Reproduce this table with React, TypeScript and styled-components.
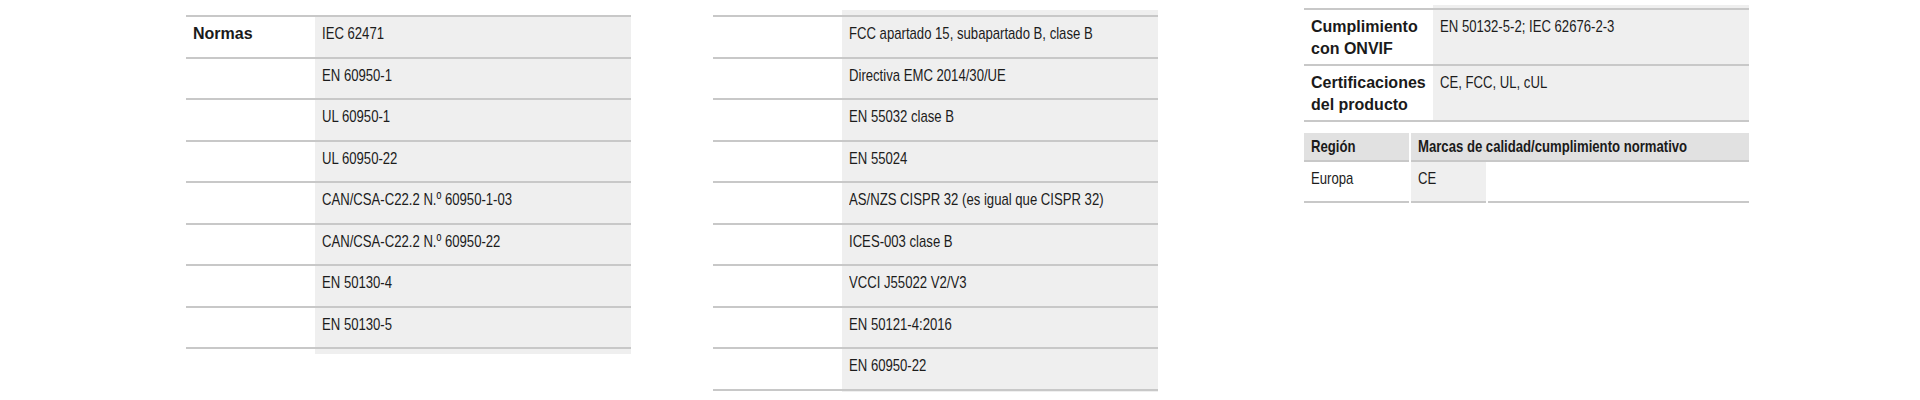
import styled, { createGlobalStyle } from 'styled-components';

const GlobalStyle = createGlobalStyle`
    html, body {
        margin: 0;
        padding: 0;
        background: #fff;
    }
    body {
        font-family: "Liberation Sans", Arial, sans-serif;
        color: #1c1c1c;
    }
`;

const LINE = '#c8c8c8';
const CELL = '#efefef';
const HEAD = '#e1e1e1';

const Page = styled.div`
    display: flex;
    align-items: flex-start;
    padding-left: 186px;
    height: 400px;
    box-sizing: border-box;
`;

const Column = styled.div<{ $left: number; $top: number }>`
    width: 445px;
    flex: none;
    margin-left: ${(p) => p.$left}px;
    margin-top: ${(p) => p.$top}px;
`;

const SpecTable = styled.div<{ $padTop: number; $padBottom: number }>`
    padding: ${(p) => p.$padTop}px 0 ${(p) => p.$padBottom}px;
    background: linear-gradient(to right, transparent 129px, ${CELL} 129px);
`;

const Rows = styled.div`
    border-top: 2px solid ${LINE};
`;

const Row = styled.div`
    display: grid;
    grid-template-columns: 129px 1fr;
    min-height: 41.5px;
    box-sizing: border-box;
    border-bottom: 2px solid ${LINE};
`;

const Label = styled.div`
    padding: 6px 7px 4px;
    font-weight: 700;
    font-size: 16px;
    line-height: 22px;
    color: #1a1a1a;
`;

const Value = styled.div`
    padding: 6px 7px 4px;
    font-size: 17px;
    line-height: 22px;
`;

// no narrow face is installed, so squeeze Liberation Sans to the condensed widths
const Narrow = styled.span`
    display: inline-block;
    white-space: nowrap;
    transform: scaleX(0.772);
    transform-origin: left center;
`;

const RegionTable = styled.div`
    margin-top: 11px;
    display: grid;
    grid-template-columns: 105px 75px 1fr;
    column-gap: 2px;
`;

const HeadCell = styled.div<{ $span?: number }>`
    grid-column: span ${(p) => p.$span ?? 1};
    background: ${HEAD};
    border-bottom: 2px solid ${LINE};
    padding: 3px 6px 2px 7px;
    font-weight: 700;
    font-size: 17px;
    line-height: 22px;
    color: #1a1a1a;
    overflow: hidden;
`;

const BodyCell = styled.div<{ $shade?: boolean }>`
    background: ${(p) => (p.$shade ? CELL : 'transparent')};
    border-bottom: 2px solid ${LINE};
    padding: 6px 6px 11px 7px;
    font-size: 17px;
    line-height: 22px;
    min-height: 22px;
`;

type Spec = { label?: string; value: string };

const normas: Spec[] = [
    { label: 'Normas', value: 'IEC 62471' },
    { value: 'EN 60950-1' },
    { value: 'UL 60950-1' },
    { value: 'UL 60950-22' },
    { value: 'CAN/CSA-C22.2 N.º 60950-1-03' },
    { value: 'CAN/CSA-C22.2 N.º 60950-22' },
    { value: 'EN 50130-4' },
    { value: 'EN 50130-5' },
];

const emc: Spec[] = [
    { value: 'FCC apartado 15, subapartado B, clase B' },
    { value: 'Directiva EMC 2014/30/UE' },
    { value: 'EN 55032 clase B' },
    { value: 'EN 55024' },
    { value: 'AS/NZS CISPR 32 (es igual que CISPR 32)' },
    { value: 'ICES-003 clase B' },
    { value: 'VCCI J55022 V2/V3' },
    { value: 'EN 50121-4:2016' },
    { value: 'EN 60950-22' },
];

const certs: Spec[] = [
    { label: 'Cumplimiento con ONVIF', value: 'EN 50132-5-2; IEC 62676-2-3' },
    { label: 'Certificaciones del producto', value: 'CE, FCC, UL, cUL' },
];

const SpecList = ({ items }: { items: Spec[] }) => (
    <Rows>
        {items.map((item, i) => (
            <Row key={i}>
                <Label>{item.label}</Label>
                <Value>
                    <Narrow>{item.value}</Narrow>
                </Value>
            </Row>
        ))}
    </Rows>
);

export default function App() {
    return (
        <>
            <GlobalStyle />
            <Page>
                <Column $left={0} $top={15}>
                    <SpecTable $padTop={0} $padBottom={5}>
                        <SpecList items={normas} />
                    </SpecTable>
                </Column>
                <Column $left={82} $top={10}>
                    <SpecTable $padTop={5} $padBottom={1}>
                        <SpecList items={emc} />
                    </SpecTable>
                </Column>
                <Column $left={146} $top={5}>
                    <SpecTable $padTop={3} $padBottom={0}>
                        <SpecList items={certs} />
                    </SpecTable>
                    <RegionTable>
                        <HeadCell>
                            <Narrow>Región</Narrow>
                        </HeadCell>
                        <HeadCell $span={2}>
                            <Narrow>Marcas de calidad/cumplimiento normativo</Narrow>
                        </HeadCell>
                        <BodyCell>
                            <Narrow>Europa</Narrow>
                        </BodyCell>
                        <BodyCell $shade>
                            <Narrow>CE</Narrow>
                        </BodyCell>
                        <BodyCell />
                    </RegionTable>
                </Column>
            </Page>
        </>
    );
}
